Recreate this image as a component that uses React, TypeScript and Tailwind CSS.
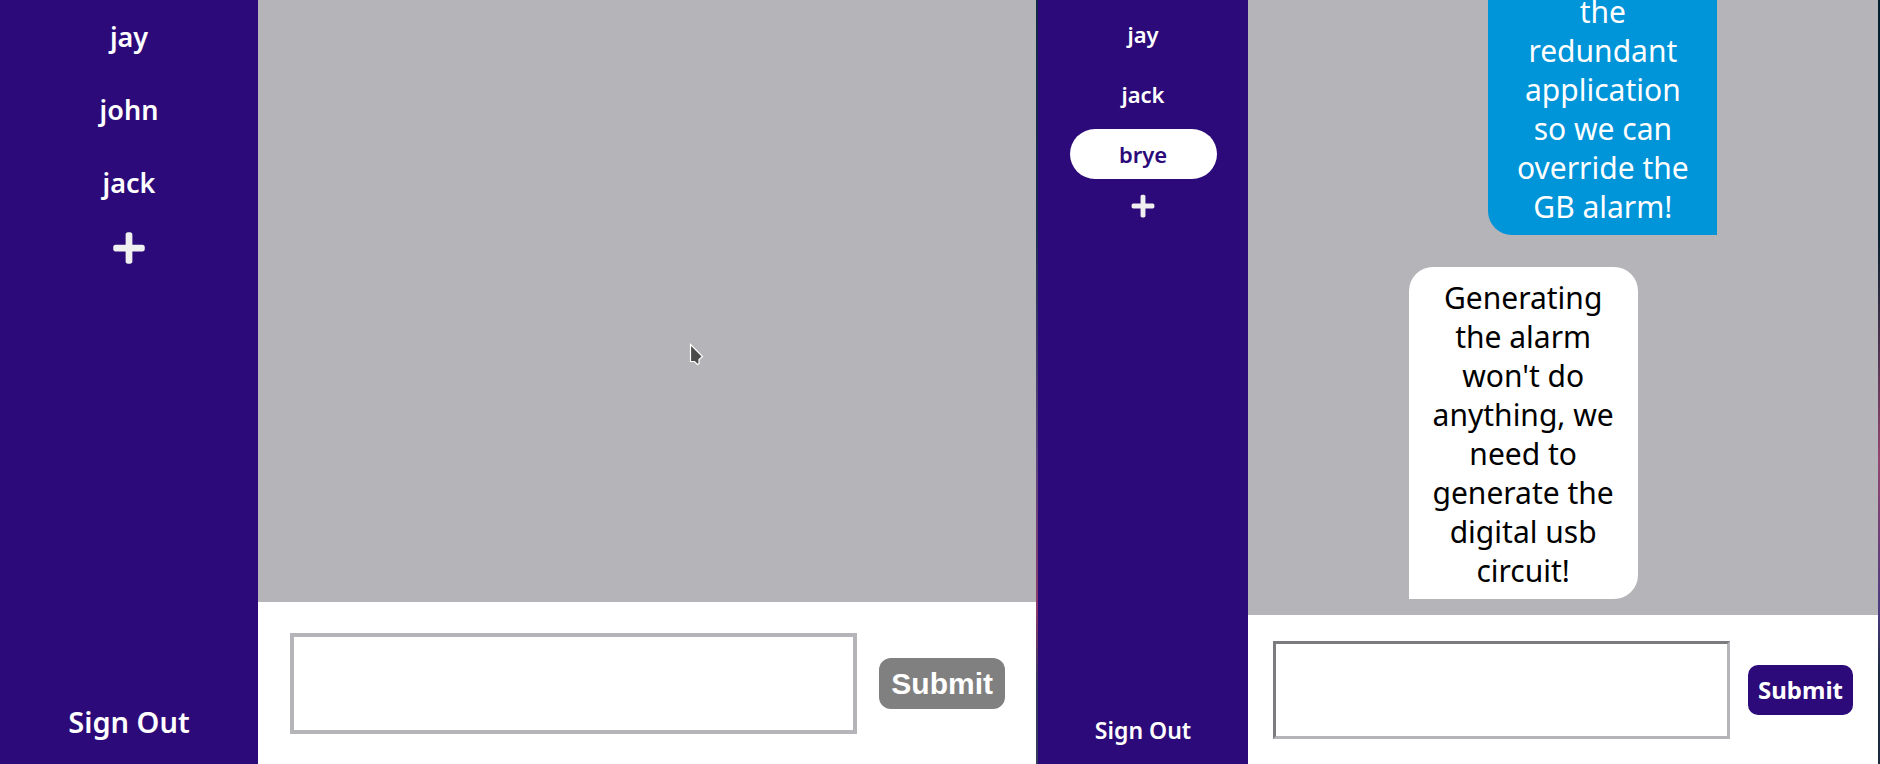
import { FaPlus } from "react-icons/fa";

const noto = "font-['Noto_Sans',sans-serif]";

function LargeChat() {
  return (
    <section className="grid min-w-0 grid-cols-[258fr_778fr]">
      <nav className="flex flex-col items-center bg-[#2c0a79] pt-[7px] pb-3 text-[27px] font-semibold text-white">
        {["jay", "john", "jack"].map((name) => (
          <button key={name} type="button" className="mb-3 h-[61px] w-[70%] rounded-full">
            {name}
          </button>
        ))}
        <button type="button" aria-label="Add chat" className="mt-1 text-[#f0f0f0]">
          <FaPlus className="size-9" />
        </button>
        <button type="button" className="mt-auto h-[60px] text-[29px]">
          Sign Out
        </button>
      </nav>
      <div className="flex min-w-0 flex-col">
        <div className="flex-1 bg-[#b5b4b9]" />
        <form className="flex items-center gap-[22px] bg-white pt-[31px] pr-[31px] pb-[30px] pl-8" onSubmit={(e) => e.preventDefault()}>
          <textarea
            aria-label="Message"
            className="h-[101px] min-w-0 flex-1 resize-none border-4 border-[#b5b4b9] outline-none"
          />
          <button
            type="submit"
            className="h-[51px] rounded-xl bg-[#808080] px-3 font-['Liberation_Sans',sans-serif] text-[30px] font-bold text-white"
          >
            Submit
          </button>
        </form>
      </div>
    </section>
  );
}

function SmallChat() {
  return (
    <section className="grid min-w-0 grid-cols-[1fr_3fr]">
      <nav className="flex flex-col items-center bg-[#2c0a79] py-[9px] text-[22px] font-semibold text-white">
        {["jay", "jack", "brye"].map((name) => (
          <button
            key={name}
            type="button"
            className={
              name === "brye"
                ? "mb-[10px] h-[50px] w-[70%] rounded-full bg-white text-[#2c0a79]"
                : "mb-[10px] h-[50px] w-[70%] rounded-full"
            }
          >
            {name}
          </button>
        ))}
        <button type="button" aria-label="Add chat" className="mt-1 text-[#f0f0f0]">
          <FaPlus className="size-[26px]" />
        </button>
        <button type="button" className="mt-auto h-[50px] text-[23px]">
          Sign Out
        </button>
      </nav>
      <div className="flex min-h-0 min-w-0 flex-col">
        <div className="flex min-h-0 flex-1 flex-col items-center justify-end overflow-hidden bg-[#b5b4b9] pb-4">
          <div className="flex w-[49%] flex-col gap-8 text-center text-[30px] leading-[39px]">
            <p className="w-[229px] shrink-0 self-end rounded-bl-3xl bg-[#0094d9] px-6 pt-[11px] pb-[9px] text-white">
              the redundant application so we can override the GB alarm!
            </p>
            <p className="w-[229px] shrink-0 rounded-3xl rounded-bl-none bg-white px-5 pt-[11px] pb-[9px] text-black">
              Generating the alarm won't do anything, we need to generate the digital usb circuit!
            </p>
          </div>
        </div>
        <form className="flex items-center gap-[18px] bg-white px-[25px] pt-[26px] pb-[25px]" onSubmit={(e) => e.preventDefault()}>
          <textarea
            aria-label="Message"
            className="h-[98px] min-w-0 flex-1 resize-none border-3 border-t-[#7b7b80] border-r-[#b5b4b9] border-b-[#b5b4b9] border-l-[#7b7b80] outline-none"
          />
          <button type="submit" className="h-[50px] rounded-[10px] bg-[#2c0a79] px-[10px] text-2xl font-bold text-white">
            Submit
          </button>
        </form>
      </div>
    </section>
  );
}

export default function App() {
  return (
    <main className={`${noto} relative grid h-screen grid-cols-[1036fr_2px_840fr_2px] grid-rows-[minmax(0,1fr)] overflow-hidden`}>
      <LargeChat />
      <div className="bg-[linear-gradient(#0f2a44,#1c2c50_30%,#5a4580_60%,#8a3a68_80%,#333a5c_90%)]" />
      <SmallChat />
      <div className="bg-[linear-gradient(#03202e,#03202e_30%,#94456f_60%,#4a3a80_80%,#1c2b40_88%)]" />
      <svg className="absolute top-[342px] left-[689px] h-6 w-4" viewBox="0 0 16 24" aria-hidden="true">
        <path d="M1.5 2.5V19.5H5.5L8.5 22.5L10 21.5V17.5L13.5 14.5Z" fill="#4a4a4a" stroke="#fff" strokeWidth="1.2" />
      </svg>
    </main>
  );
}
